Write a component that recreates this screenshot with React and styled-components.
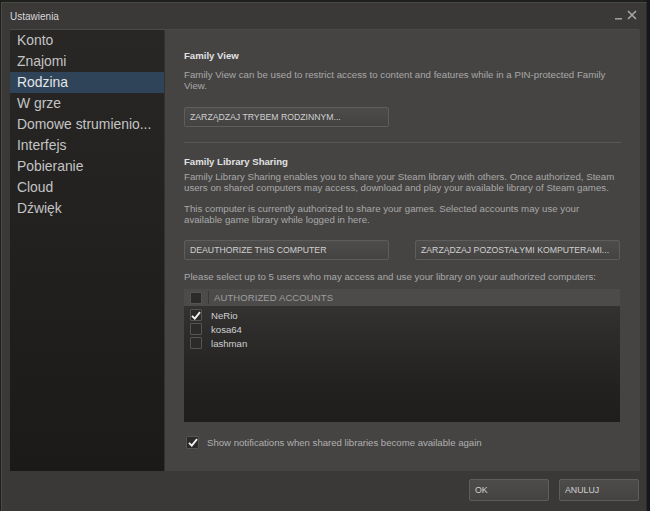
import React from "react";
import styled, { createGlobalStyle } from "styled-components";

const Global = createGlobalStyle`
  html, body { margin: 0; padding: 0; }
  body {
    background: #1d201b;
    font-family: "Liberation Sans", Arial, sans-serif;
    overflow: hidden;
  }
`;

const Page = styled.div`
  width: 650px;
  height: 511px;
  padding: 2px 0 0 1px;
  box-sizing: border-box;
  display: flex;
  background: linear-gradient(90deg, #1d201b 0, #1d201b 646px, #15181c 646px);
`;

const Window = styled.div`
  width: 646px;
  height: 520px;
  background: #3a3938;
  border-left: 1px solid #4a4948;
  border-top: 1px solid #4a4948;
  border-right: 1px solid #2c2b2a;
  box-sizing: border-box;
  display: flex;
  flex-direction: column;
`;

const TitleBar = styled.div`
  height: 26px;
  margin: 0 7px 0 8px;
  display: flex;
  align-items: center;
  justify-content: space-between;
  border-bottom: 1px solid #4b4a49;
`;

const Title = styled.div`
  color: #d8d8d8;
  font-size: 10px;
  padding-top: 1px;
`;

const Controls = styled.div`
  display: flex;
  align-items: center;
  gap: 4px;
  margin-right: 2px;
  margin-top: -2px;
`;

const Body = styled.div`
  display: flex;
  height: 441px;
  margin-left: 8px;
  margin-right: 6px;
`;

const Sidebar = styled.div`
  width: 155px;
  background: linear-gradient(180deg, #282726 0%, #201f1e 60%, #1b1a19 100%);
  border-right: 1px solid #333231;
  box-sizing: border-box;
`;

const NavItem = styled.div`
  height: 21px;
  line-height: 21px;
  padding-left: 7px;
  font-size: 13.9px;
  color: ${(p) => (p.$active ? "#e6e6e6" : "#c4c4c4")};
  background: ${(p) => (p.$active ? "#2f4459" : "transparent")};
  white-space: nowrap;
`;

const Content = styled.div`
  flex: 1;
  background: #454443;
  padding: 19px 19px 0 19px;
  box-sizing: border-box;
  display: flex;
  flex-direction: column;
`;

const Heading = styled.div`
  color: #e2e2e2;
  font-size: 9.6px;
  font-weight: bold;
  line-height: 12px;
  margin-top: ${(p) => p.$mt || 0}px;
`;

const Para = styled.div`
  color: #a8a8a8;
  font-size: 9.7px;
  line-height: 11px;
  width: 432px;
  margin-top: ${(p) => p.$mt || 0}px;
`;

const ButtonRow = styled.div`
  display: flex;
  gap: 26px;
  margin-top: ${(p) => p.$mt || 0}px;
`;

const Button = styled.div`
  width: ${(p) => p.$w || 205}px;
  height: 20px;
  box-sizing: border-box;
  border: 1px solid #5e5d5c;
  border-radius: 2px;
  background: linear-gradient(180deg, #4d4c4b, #444342);
  color: #d0d0d0;
  font-size: 8.7px;
  line-height: 18px;
  padding-left: 5px;
  white-space: nowrap;
`;

const Divider = styled.div`
  height: 1px;
  background: #575655;
  width: 437px;
  margin-top: ${(p) => p.$mt || 0}px;
`;

const Table = styled.div`
  width: 436px;
  height: 133px;
  margin-top: ${(p) => p.$mt || 0}px;
  display: flex;
  flex-direction: column;
`;

const TableHead = styled.div`
  height: 17px;
  background: #4c4b4a;
  display: flex;
  align-items: center;
  padding-left: 6px;
`;

const HeadDivider = styled.div`
  width: 1px;
  height: 13px;
  background: #3a3938;
  margin: 0 5px 0 6px;
`;

const HeadText = styled.div`
  color: #9e9e9e;
  font-size: 9.5px;
  letter-spacing: 0.1px;
`;

const TableBody = styled.div`
  flex: 1;
  background: linear-gradient(180deg, #333231 0%, #2a2928 35%, #222120 70%, #1f1e1d 100%);
  padding-top: 2px;
`;

const Row = styled.div`
  height: 14px;
  display: flex;
  align-items: center;
  padding-left: 6px;
  gap: 9px;
`;

const RowText = styled.div`
  color: #cfcfcf;
  font-size: 9.6px;
`;

const Box = styled.div`
  width: ${(p) => p.$size || 12}px;
  height: ${(p) => p.$size || 12}px;
  box-sizing: border-box;
  border: 1px solid #555453;
  background: #2c2b2a;
  border-radius: 1px;
  display: flex;
  align-items: center;
  justify-content: center;
  flex-shrink: 0;
`;

const NotifyRow = styled.div`
  display: flex;
  align-items: center;
  gap: 8px;
  margin-top: 14px;
  padding-left: 2px;
`;

const NotifyText = styled.div`
  color: #b0b0b0;
  font-size: 9.6px;
`;

const Footer = styled.div`
  display: flex;
  justify-content: flex-end;
  gap: 10px;
  padding: 8px 7px 0 0;
`;

const FooterButton = styled(Button)`
  width: 80px;
  height: 22px;
  line-height: 20px;
  font-size: 8.8px;
`;

const Check = () => (
  <svg width="10" height="9" viewBox="0 0 10 9">
    <path d="M1 4.8 L3.8 7.6 L9 1.2" fill="none" stroke="#f2f2f2" strokeWidth="1.9" />
  </svg>
);

const CheckBox = ({ checked, size }) => <Box $size={size}>{checked && <Check />}</Box>;

const navItems = [
  "Konto",
  "Znajomi",
  "Rodzina",
  "W grze",
  "Domowe strumienio...",
  "Interfejs",
  "Pobieranie",
  "Cloud",
  "Dźwięk",
];

const accounts = [
  { name: "NeRio", checked: true },
  { name: "kosa64", checked: false },
  { name: "lashman", checked: false },
];

export default function App() {
  return (
    <>
      <Global />
      <Page>
        <Window>
          <TitleBar>
            <Title>Ustawienia</Title>
            <Controls>
              <svg width="8" height="10" viewBox="0 0 8 10">
                <rect x="0" y="8" width="7" height="1.6" fill="#9a9a9a" />
              </svg>
              <svg width="10" height="10" viewBox="0 0 10 10">
                <path d="M1 1 L9 9 M9 1 L1 9" stroke="#a8a8a8" strokeWidth="1.6" />
              </svg>
            </Controls>
          </TitleBar>
          <Body>
            <Sidebar>
              {navItems.map((n) => (
                <NavItem key={n} $active={n === "Rodzina"}>
                  {n}
                </NavItem>
              ))}
            </Sidebar>
            <Content>
              <Heading $mt={1}>Family View</Heading>
              <Para $mt={7}>
                Family View can be used to restrict access to content and features while in a PIN-protected Family View.
              </Para>
              <ButtonRow $mt={16}>
                <Button>ZARZĄDZAJ TRYBEM RODZINNYM...</Button>
              </ButtonRow>
              <Divider $mt={15} />
              <Heading $mt={13}>Family Library Sharing</Heading>
              <Para $mt={3}>
                Family Library Sharing enables you to share your Steam library with others. Once authorized, Steam users on shared computers may access, download and play your available library of Steam games.
              </Para>
              <Para $mt={10}>
                This computer is currently authorized to share your games. Selected accounts may use your available game library while logged in here.
              </Para>
              <ButtonRow $mt={15}>
                <Button>DEAUTHORIZE THIS COMPUTER</Button>
                <Button>ZARZĄDZAJ POZOSTAŁYMI KOMPUTERAMI...</Button>
              </ButtonRow>
              <Para $mt={11}>
                Please select up to 5 users who may access and use your library on your authorized computers:
              </Para>
              <Table $mt={7}>
                <TableHead>
                  <CheckBox />
                  <HeadDivider />
                  <HeadText>AUTHORIZED ACCOUNTS</HeadText>
                </TableHead>
                <TableBody>
                  {accounts.map((a) => (
                    <Row key={a.name}>
                      <CheckBox checked={a.checked} />
                      <RowText>{a.name}</RowText>
                    </Row>
                  ))}
                </TableBody>
              </Table>
              <NotifyRow>
                <CheckBox checked size={13} />
                <NotifyText>Show notifications when shared libraries become available again</NotifyText>
              </NotifyRow>
            </Content>
          </Body>
          <Footer>
            <FooterButton>OK</FooterButton>
            <FooterButton>ANULUJ</FooterButton>
          </Footer>
        </Window>
      </Page>
    </>
  );
}
